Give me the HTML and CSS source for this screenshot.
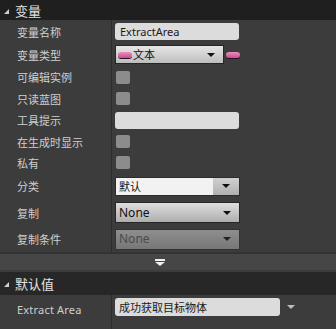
FILE: index.html
```html
<!DOCTYPE html>
<html>
<head>
<meta charset="utf-8">
<link rel="stylesheet" href="styles.css">
</head>
<body>
<div class="panel">
  <div class="cat-header"><span class="tri"></span><span class="cat-title">变量</span></div>
  <div class="rows">
    <div class="row r1"><div class="label">变量名称</div><div class="value"><div class="textbox">ExtractArea</div></div></div>
    <div class="row r2"><div class="label">变量类型</div><div class="value"><div class="combo type-combo"><span class="pill"></span><span class="ctext">文本</span><span class="arrow"></span></div><span class="pill pill-out"></span></div></div>
    <div class="row r3"><div class="label">可编辑实例</div><div class="value"><span class="check"></span></div></div>
    <div class="row r4"><div class="label">只读蓝图</div><div class="value"><span class="check"></span></div></div>
    <div class="row r5"><div class="label">工具提示</div><div class="value"><div class="textbox"></div></div></div>
    <div class="row r6"><div class="label">在生成时显示</div><div class="value"><span class="check"></span></div></div>
    <div class="row r7"><div class="label">私有</div><div class="value"><span class="check"></span></div></div>
    <div class="row r8"><div class="label">分类</div><div class="value"><div class="combo split-combo"><span class="ctext">默认</span><span class="btn"><span class="arrow"></span></span></div></div></div>
    <div class="row r9"><div class="label">复制</div><div class="value"><div class="combo grad-combo"><span class="ctext big">None</span><span class="arrow"></span></div></div></div>
    <div class="row r10"><div class="label">复制条件</div><div class="value"><div class="combo dis-combo"><span class="ctext big">None</span><span class="arrow"></span></div></div></div>
  </div>
  <div class="expander"><span class="exp-arrow"></span></div>
  <div class="cat-header h2"><span class="tri"></span><span class="cat-title">默认值</span></div>
  <div class="rows last">
    <div class="row r11"><div class="label en">Extract Area</div><div class="value"><div class="textbox wide">成功获取目标物体</div><span class="arrow light"></span></div></div>
  </div>
</div>
</body>
</html>
```

FILE: styles.css
```css
html, body {
  margin: 0;
  padding: 0;
  background: #3c3c3c;
  width: 336px;
  height: 329px;
  overflow: hidden;
}
.panel {
  font-family: "Noto Sans CJK SC", "Noto Sans", sans-serif;
  color: #d2d2d2;
  display: flex;
  flex-direction: column;
  width: 336px;
}
.cat-header {
  height: 20px;
  background: #1f1f1f;
  display: flex;
  align-items: center;
  padding-left: 4px;
  box-sizing: border-box;
}
.cat-header.h2 {
  height: 23px;
  margin-top: 2px;
  background: #272727;
}
.tri {
  width: 0;
  height: 0;
  border-left: 5px solid transparent;
  border-bottom: 5px solid #cfcfcf;
  margin-right: 6px;
  margin-top: 2px;
}
.cat-title {
  font-size: 13px;
  color: #e4e4e4;
  line-height: 1;
}
.rows {
  display: flex;
  flex-direction: column;
  background: #3c3c3c;
}
.row {
  display: flex;
  align-items: center;
}
.r1 { height: 23px; }
.r2 { height: 23px; }
.r3 { height: 22px; }
.r4 { height: 21px; }
.r5 { height: 22px; }
.r6 { height: 21px; }
.r7 { height: 21px; }
.r8 { height: 26px; }
.r9 { height: 27px; }
.r10 { height: 26px; }
.r11 { height: 36px; align-items: flex-start; }
.label {
  width: 112px;
  height: 100%;
  box-sizing: border-box;
  border-right: 1px solid #2c2c2c;
  padding-left: 17px;
  font-size: 11px;
  display: flex;
  align-items: center;
  color: #cfcfcf;
}
.r11 .label { height: 36px; align-items: flex-start; padding-top: 7px; }
.label.en { font-family: "Noto Sans", "Open Sans", sans-serif; font-size: 11px; letter-spacing: 0.2px; }
.value {
  flex: 1;
  display: flex;
  align-items: center;
  padding-left: 3px;
  height: 100%;
}
.r11 .value { align-items: flex-start; padding-top: 3px; }
.textbox {
  width: 124px;
  height: 17px;
  background: #dcdcdc;
  border-radius: 3px;
  color: #1a1a1a;
  font-family: "Noto Sans", sans-serif;
  font-size: 11px;
  line-height: 17px;
  padding-left: 5px;
  box-sizing: border-box;
}
.textbox.wide {
  width: 165px;
  height: 18px;
  line-height: 18px;
  padding-left: 4px;
  font-family: "Noto Sans CJK SC", sans-serif;
}
.combo {
  height: 19px;
  box-sizing: border-box;
  border: 1px solid #262626;
  display: flex;
  align-items: center;
  color: #111;
  position: relative;
}
.ctext {
  font-size: 11px;
  flex: 1;
  padding-left: 3px;
  line-height: 1;
}
.ctext.big {
  font-family: "Noto Sans", sans-serif;
  font-size: 12px;
}
.arrow {
  width: 0;
  height: 0;
  border-left: 4px solid transparent;
  border-right: 4px solid transparent;
  border-top: 4px solid #111;
  margin-right: 8px;
}
.type-combo {
  width: 109px;
  background: linear-gradient(#e6e6e6, #bdbdbd);
}
.type-combo .ctext { padding-left: 1px; }
.pill {
  width: 14px;
  height: 6px;
  border-radius: 3px;
  background: linear-gradient(#f08cc0, #c34f8a);
  box-shadow: 0 1px 0 #2a1020;
  margin-left: 2px;
}
.pill-out {
  margin-left: 2px;
}
.check {
  width: 14px;
  height: 13px;
  background: #8c8c8c;
  border-radius: 2px;
  margin-left: 1px;
}
.split-combo {
  width: 125px;
  background: #f2f2f2;
  border-color: #2c2c2c;
}
.split-combo .btn {
  width: 26px;
  height: 100%;
  background: linear-gradient(#d0d0d0, #b0b0b0);
  display: flex;
  align-items: center;
  justify-content: center;
}
.split-combo .btn .arrow { margin-right: 0; }
.grad-combo {
  width: 125px;
  height: 21px;
  background: linear-gradient(#dedede, #aeaeae);
}
.dis-combo {
  width: 125px;
  height: 21px;
  background: linear-gradient(#8e8e8e, #777);
  border-color: #333;
  color: #4a4a4a;
}
.dis-combo .arrow { border-top-color: #222; }
.expander {
  height: 16px;
  background: #464646;
  border-top: 2px solid #333;
  display: flex;
  justify-content: center;
  align-items: center;
  padding-right: 16px;
}
.exp-arrow {
  width: 10px;
  height: 7px;
  border-top: 2px solid #efefef;
  box-sizing: border-box;
  position: relative;
}
.exp-arrow::after {
  content: "";
  position: absolute;
  left: 0;
  top: 1px;
  border-left: 5px solid transparent;
  border-right: 5px solid transparent;
  border-top: 4px solid #efefef;
}
.arrow.light {
  border-top-color: #bdbdbd;
  margin-left: 7px;
  margin-top: 7px;
}
```
